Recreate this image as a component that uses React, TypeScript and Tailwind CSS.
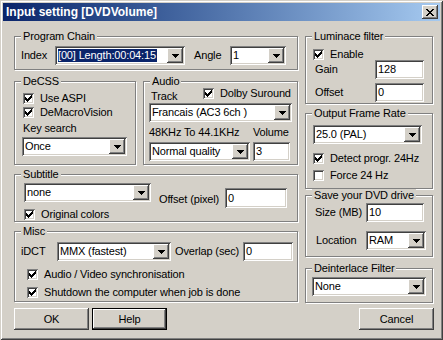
import type { ReactNode } from 'react';

// win2000 bevels
const sunken =
  'shadow-[inset_1px_1px_0_#808080,inset_-1px_-1px_0_#ffffff,inset_2px_2px_0_#404040,inset_-2px_-2px_0_#d4d0c8]';
const raised =
  'shadow-[inset_-1px_-1px_0_#404040,inset_1px_1px_0_#ffffff,inset_-2px_-2px_0_#808080,inset_2px_2px_0_#d4d0c8]';

const CHECK =
  'M6 0h1v1h-1zM5 1h2v1h-2zM0 2h1v1h-1zM4 2h3v1h-3zM0 3h2v1h-2zM3 3h3v1h-3zM0 4h5v1h-5zM1 5h3v1h-3zM2 6h1v1h-1z';
const CLOSE =
  'M0 0h2v1h-2zM6 0h2v1h-2zM1 1h2v1h-2zM5 1h2v1h-2zM2 2h4v1h-4zM3 3h2v1h-2zM2 4h4v1h-4zM1 5h2v1h-2zM5 5h2v1h-2zM0 6h2v1h-2zM6 6h2v1h-2z';
const ARROW = 'M0 0h7v1h-7zM1 1h5v1h-5zM2 2h3v1h-3zM3 3h1v1h-1z';

function Group({ title, className, children }: { title: string; className: string; children: ReactNode }) {
  return (
    <div className={`relative border border-[#808080] shadow-[inset_1px_1px_0_#ffffff,1px_1px_0_#ffffff] ${className}`}>
      <span className="absolute left-[6px] top-[-7px] px-[2px] bg-[#d4d0c8] leading-[13px] whitespace-nowrap">
        {title}
      </span>
      {children}
    </div>
  );
}

function Combo({ value, className, selected }: { value: string; className: string; selected?: boolean }) {
  return (
    <div className={`flex h-[19px] bg-white p-[2px] ${sunken} ${className}`}>
      <div className="flex-1 flex items-center pl-[1px] overflow-hidden whitespace-nowrap">
        {selected ? <span className="bg-[#0a246a] text-white pr-[1px]">{value}</span> : value}
      </div>
      <div className={`w-[16px] bg-[#d4d0c8] flex items-center justify-center ${raised}`}>
        <svg width="7" height="4" viewBox="0 0 7 4" shapeRendering="crispEdges">
          <path d={ARROW} fill="#000" />
        </svg>
      </div>
    </div>
  );
}

function Input({ value, className }: { value: string; className: string }) {
  return (
    <div className={`flex items-center bg-white pl-[3px] ${sunken} ${className}`}>{value}</div>
  );
}

function Check({ label, checked = true, className = '' }: { label: string; checked?: boolean; className?: string }) {
  return (
    <div className={`flex items-center gap-[6px] h-[11px] whitespace-nowrap ${className}`}>
      <div className={`w-[11px] h-[11px] shrink-0 bg-white p-[2px] ${sunken}`}>
        {checked && (
          <svg width="7" height="7" viewBox="0 0 7 7" shapeRendering="crispEdges" className="block">
            <path d={CHECK} fill="#000" />
          </svg>
        )}
      </div>
      <span>{label}</span>
    </div>
  );
}

function Button({ label, className = '', focused }: { label: string; className?: string; focused?: boolean }) {
  if (focused) {
    return (
      <div className={`w-[75px] h-[22px] border border-black ${className}`}>
        <div className={`w-full h-full flex items-center justify-center ${raised}`}>{label}</div>
      </div>
    );
  }
  return (
    <div className={`w-[75px] h-[22px] flex items-center justify-center ${raised} ${className}`}>{label}</div>
  );
}

export default function App() {
  return (
    <div
      className={`w-[443px] h-[340px] overflow-hidden bg-[#d4d0c8] p-[3px] flex flex-col text-black text-[11px] leading-[13px] tracking-[-0.15px] font-['Liberation_Sans',Arial,sans-serif] shadow-[inset_1px_1px_0_#d4d0c8,inset_-1px_-1px_0_#404040,inset_2px_2px_0_#ffffff,inset_-2px_-2px_0_#808080]`}
    >
      {/* title bar */}
      <div className="h-[18px] shrink-0 flex items-center bg-linear-to-r from-[#0a246a] to-[#a6caf0] pl-[3px] pr-[2px]">
        <span className="text-white font-bold text-[12px] tracking-normal">Input setting [DVDVolume]</span>
        <div className={`ml-auto w-[16px] h-[14px] bg-[#d4d0c8] flex items-center justify-center ${raised}`}>
          <svg width="8" height="7" viewBox="0 0 8 7" shapeRendering="crispEdges">
            <path d={CLOSE} fill="#000" />
          </svg>
        </div>
      </div>

      <div className="flex flex-col pl-[11px] pr-[6px]">
        <div className="flex items-start gap-[7px] mt-[15px]">
          {/* left column */}
          <div className="w-[284px] flex flex-col">
            <Group title="Program Chain" className="h-[34px] pt-[9px] pl-[6px]">
              <div className="flex items-center">
                <span className="w-[34px]">Index</span>
                <Combo value="[00] Length:00:04:15" selected className="w-[130px]" />
                <span className="ml-[9px] w-[36px]">Angle</span>
                <Combo value="1" className="w-[56px]" />
              </div>
            </Group>

            <div className="flex gap-[7px] mt-[11px]">
              <Group title="DeCSS" className="w-[122px] h-[84px] pt-[11px] pl-[8px] flex flex-col">
                <Check label="Use ASPI" />
                <Check label="DeMacroVision" className="mt-[3px]" />
                <span className="mt-[4px]">Key search</span>
                <Combo value="Once" className="w-[105px] mt-[2px] -ml-[1px]" />
              </Group>

              <Group title="Audio" className="w-[155px] h-[84px] pt-[6px] pl-[5px] flex flex-col">
                <div className="flex items-start h-[11px]">
                  <span className="ml-[2px] w-[52px] mt-[2px]">Track</span>
                  <Check label="Dolby Suround" />
                </div>
                <Combo value="Francais (AC3 6ch )" className="w-[143px] mt-[4px]" />
                <div className="flex mt-[4px]">
                  <span className="w-[104px]">48KHz To 44.1KHz</span>
                  <span>Volume</span>
                </div>
                <div className="flex mt-[3px]">
                  <Combo value="Normal quality" className="w-[101px]" />
                  <Input value="3" className="w-[37px] h-[19px] ml-[3px]" />
                </div>
              </Group>
            </div>

            <Group title="Subtitle" className="h-[48px] mt-[9px] pt-[8px] pl-[9px]">
              <div className="flex items-start">
                <div className="flex flex-col">
                  <Combo value="none" className="w-[127px]" />
                  <Check label="Original colors" className="mt-[7px]" />
                </div>
                <div className="flex items-center ml-[8px] mt-[5px]">
                  <span className="w-[66px] pt-[2px]">Offset (pixel)</span>
                  <Input value="0" className="w-[62px] h-[20px]" />
                </div>
              </div>
            </Group>

            <Group title="Misc" className="h-[71px] mt-[9px] pt-[10px] pl-[6px] flex flex-col">
              <div className="flex items-center">
                <span className="w-[36px]">iDCT</span>
                <Combo value="MMX (fastest)" className="w-[114px]" />
                <span className="ml-[4px] w-[68px]">Overlap (sec)</span>
                <Input value="0" className="w-[50px] h-[19px]" />
              </div>
              <Check label="Audio / Video synchronisation" className="mt-[8px] ml-[6px]" />
              <Check label="Shutdown the computer when job is done" className="mt-[7px] ml-[6px]" />
            </Group>
          </div>

          {/* right column */}
          <div className="w-[128px] flex flex-col">
            <Group title="Luminace filter" className="h-[68px] pt-[12px] pl-[7px] flex flex-col">
              <Check label="Enable" />
              <div className="flex items-center">
                <span className="ml-[2px] w-[60px]">Gain</span>
                <Input value="128" className="w-[49px] h-[19px]" />
              </div>
              <div className="flex items-center mt-[4px]">
                <span className="ml-[2px] w-[60px]">Offset</span>
                <Input value="0" className="w-[49px] h-[19px]" />
              </div>
            </Group>

            <Group title="Output Frame Rate" className="h-[76px] mt-[9px] pt-[11px] pl-[7px] flex flex-col">
              <Combo value="25.0  (PAL)" className="w-[109px] whitespace-pre" />
              <Check label="Detect progr. 24Hz" className="mt-[9px]" />
              <Check label="Force 24 Hz" checked={false} className="mt-[6px]" />
            </Group>

            <Group title="Save your DVD drive" className="h-[62px] mt-[6px] pt-[7px] pl-[7px] flex flex-col">
              <div className="flex items-center">
                <span className="w-[53px] pl-[2px]">Size (MB)</span>
                <Input value="10" className="w-[58px] h-[19px]" />
              </div>
              <div className="flex items-center mt-[9px]">
                <span className="w-[53px] pl-[3px]">Location</span>
                <Combo value="RAM" className="w-[60px]" />
              </div>
            </Group>

            <Group title="Deinterlace Filter" className="h-[35px] mt-[11px] pt-[8px] pl-[6px]">
              <Combo value="None" className="w-[114px]" />
            </Group>
          </div>
        </div>

        <div className="flex mt-[5px]">
          <Button label="OK" />
          <Button label="Help" focused className="ml-[3px]" />
          <Button label="Cancel" className="ml-auto" />
        </div>
      </div>
    </div>
  );
}
